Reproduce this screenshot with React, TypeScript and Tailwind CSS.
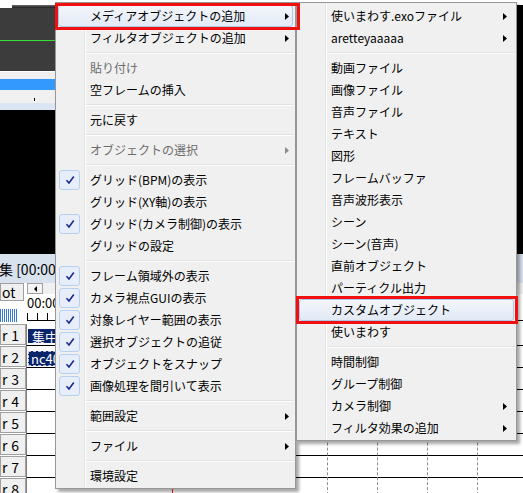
import React from "react";

type MI = { t: string; d?: boolean; c?: boolean; a?: boolean; h?: boolean } | null;

const mainItems: MI[] = [
  { t: "メディアオブジェクトの追加", a: true, h: true },
  { t: "フィルタオブジェクトの追加", a: true },
  null,
  { t: "貼り付け", d: true },
  { t: "空フレームの挿入" },
  null,
  { t: "元に戻す" },
  null,
  { t: "オブジェクトの選択", d: true, a: true },
  null,
  { t: "グリッド(BPM)の表示", c: true },
  { t: "グリッド(XY軸)の表示" },
  { t: "グリッド(カメラ制御)の表示", c: true },
  { t: "グリッドの設定" },
  null,
  { t: "フレーム領域外の表示", c: true },
  { t: "カメラ視点GUIの表示", c: true },
  { t: "対象レイヤー範囲の表示", c: true },
  { t: "選択オブジェクトの追従", c: true },
  { t: "オブジェクトをスナップ", c: true },
  { t: "画像処理を間引いて表示", c: true },
  null,
  { t: "範囲設定", a: true },
  null,
  { t: "ファイル", a: true },
  null,
  { t: "環境設定" },
];

const subItems: MI[] = [
  { t: "使いまわす.exoファイル", a: true },
  { t: "aretteyaaaaa", a: true },
  null,
  { t: "動画ファイル" },
  { t: "画像ファイル" },
  { t: "音声ファイル" },
  { t: "テキスト" },
  { t: "図形" },
  { t: "フレームバッファ" },
  { t: "音声波形表示" },
  { t: "シーン" },
  { t: "シーン(音声)" },
  { t: "直前オブジェクト" },
  { t: "パーティクル出力" },
  { t: "カスタムオブジェクト", h: true },
  { t: "使いまわす" },
  null,
  { t: "時間制御" },
  { t: "グループ制御" },
  { t: "カメラ制御", a: true },
  { t: "フィルタ効果の追加", a: true },
];

function Check() {
  return (
    <svg width="10" height="10" viewBox="0 0 10 10">
      <path d="M1.5 5.2 L4 8 L8.8 1.5" fill="none" stroke="#1a2a8e" strokeWidth="1.6" strokeLinejoin="miter" />
    </svg>
  );
}

function Menu({ items, sub }: { items: MI[]; sub?: boolean }) {
  return (
    <div className="relative pt-[2px] pb-[1px]">
      <div className="absolute top-0 bottom-0 left-[28px] w-px bg-[#e2e3e3]" />
      <div className="absolute top-0 bottom-0 left-[29px] w-px bg-white" />
      {items.map((it, i) =>
        it === null ? (
          <div key={i} className="relative h-[8px] flex flex-col justify-center pl-[30px] pr-[1px]">
            <div className="h-px bg-[#e0e0e0]" />
            <div className="h-px bg-white" />
          </div>
        ) : (
          <div
            key={i}
            className={
              "relative h-[22px] flex items-center pl-[34px] text-[12px] leading-none whitespace-nowrap " +
              (it.d ? "text-[#6d6d6d]" : "text-black")
            }
          >
            {it.h && (
              <div className="absolute top-0 bottom-0 left-[2px] right-[2px] rounded-[3px] border border-[#abc7ec] bg-gradient-to-b from-[#f3f6fb] to-[#e2eaf6]" />
            )}
            {it.c && (
              <div className="absolute left-[3px] top-[1px] w-[21px] h-[20px] rounded-[3px] border border-[#b6d0f1] bg-[#e7eef9] flex items-center justify-center">
                <Check />
              </div>
            )}
            <span className="relative">{it.t}</span>
            {it.a && (
              <svg
                className={"absolute top-[8px] " + (sub ? "right-[9px]" : "right-[6px]")}
                width="4"
                height="7"
                viewBox="0 0 4 7"
              >
                <path d="M0 0 L4 3.5 L0 7 Z" fill={it.d ? "#8a8a8a" : "#000"} />
              </svg>
            )}
          </div>
        )
      )}
    </div>
  );
}

const rows = ["1", "2", "3", "4", "5", "6", "7", "8"];

export default function App() {
  return (
    <div className="relative w-[523px] h-[493px] overflow-hidden bg-white font-['Noto_Sans_CJK_JP',sans-serif]">
      {/* top area */}
      <div className="flex h-[254px]">
        <div className="w-[300px] flex flex-col">
          <div className="h-[5px] bg-white" />
          <div className="h-[3px] bg-white pl-[12px]">
            <div className="h-full bg-gradient-to-b from-[#6a6a6a] to-[#202020]" />
          </div>
          <div className="h-[63px] bg-[#3c3c3c] flex flex-col">
            <div className="h-[32px]" />
            <div className="h-px bg-[#33e033]" />
          </div>
          <div className="h-[8px] bg-[#f0f0f0] border-t border-white" />
          <div className="h-[11px] bg-[#3399ff]" />
          <div className="h-[13px] bg-[#f0f0f0] pl-[34px] pt-[8px]">
            <div className="w-px h-[3px] bg-black" />
          </div>
          <div className="h-[7px] bg-[#dbe5f3]" />
          <div className="h-[144px] bg-black" />
        </div>
        <div className="flex-1 flex flex-col">
          <div className="h-[5px] bg-white" />
          <div className="flex-1 bg-black" />
        </div>
      </div>
      {/* title bar */}
      <div className="h-[29px] bg-[#d8e2ee] flex items-center text-[14px] leading-none text-black whitespace-nowrap">
        <span className="-ml-[1px]">集 [00:00:00]</span>
      </div>
      {/* ruler area */}
      <div className="h-[41px] flex bg-white">
        <div className="w-[26px] flex flex-col">
          <div className="h-[18px] w-[24px] border border-[#a0a0a0] bg-[#f0f0f0] flex items-center pl-[1px] text-[14px] leading-none">
            ot
          </div>
          <div className="h-[8px]" />
          <div className="h-[13px] w-[18px] bg-[repeating-linear-gradient(90deg,#3a78d8_0_1px,#ffffff_1px_2px)]" />
        </div>
        <div className="flex-1 flex flex-col pl-[1px]">
          <div className="h-[11px] flex bg-[#f0f0f0]">
            <div className="w-[16px] h-full border border-[#a0a0a0] bg-[#f4f4f4] flex items-center justify-center">
              <svg width="3" height="6" viewBox="0 0 3 6">
                <path d="M3 0 L0 3 L3 6 Z" fill="#000" />
              </svg>
            </div>
            <div className="flex-1" />
          </div>
          <div className="h-[16px] flex items-center text-[13px] leading-none text-black">00:00:00.00</div>
          <div className="h-[11px] flex flex-col justify-end border-b border-black">
            <div className="h-[7px] bg-[repeating-linear-gradient(90deg,#000_0_1px,transparent_1px_10px)]" />
          </div>
          <div className="h-[3px]" />
        </div>
      </div>
      {/* layer rows */}
      <div className="relative">
        {rows.map((n) => (
          <div key={n} className="h-[22px] flex">
            <div className="w-[26px] h-[21px] border border-[#a0a0a0] bg-[#f0f0f0] flex items-center justify-between pl-[1px] pr-[6px] text-[14px] leading-none text-black">
              <span>r</span>
              <span>{n}</span>
            </div>
            <div className="flex-1 relative border-l border-[#808080] border-b border-b-black bg-white">
              {n === "1" && (
                <div className="absolute left-[1px] top-[5px] h-[14px] w-[220px] bg-[#0a246a] text-white text-[13px] leading-none flex items-center pl-[4px]">
                  集中線
                </div>
              )}
              {n === "2" && (
                <div className="absolute left-[1px] top-[5px] h-[15px] w-[220px] bg-[#0a246a] border border-dashed border-[#c0c8e0] text-white text-[13px] leading-none flex items-center pl-[2px]">
                  nc40
                </div>
              )}
            </div>
          </div>
        ))}
        <div className="absolute top-0 bottom-0 left-[327px] border-l border-dashed border-[#8c8c8c]" />
        <div className="absolute top-0 bottom-0 left-[377px] border-l border-dashed border-[#8c8c8c]" />
        <div className="absolute top-0 bottom-0 left-[427px] border-l border-dashed border-[#8c8c8c]" />
        <div className="absolute top-0 bottom-0 left-[477px] border-l border-dashed border-[#8c8c8c]" />
        <div className="absolute top-0 bottom-0 left-[172px] w-px bg-[#ff2020]" />
      </div>

      {/* main context menu */}
      <div className="absolute left-[55px] top-[2px] w-[241px] border border-[#979797] bg-[#f0f0f0] shadow-[3px_3px_3px_rgba(0,0,0,0.35)]">
        <Menu items={mainItems} />
      </div>
      {/* submenu */}
      <div className="absolute left-[296px] top-[2px] w-[221px] border border-[#979797] bg-[#f0f0f0] shadow-[3px_3px_3px_rgba(0,0,0,0.35)]">
        <Menu items={subItems} sub />
      </div>

      {/* red annotation boxes */}
      <div className="absolute left-[55px] top-[3px] w-[245px] h-[27px] border-[3px] border-[#f01010]" />
      <div className="absolute left-[296px] top-[296px] w-[222px] h-[28px] border-[3px] border-[#f01010]" />
    </div>
  );
}
